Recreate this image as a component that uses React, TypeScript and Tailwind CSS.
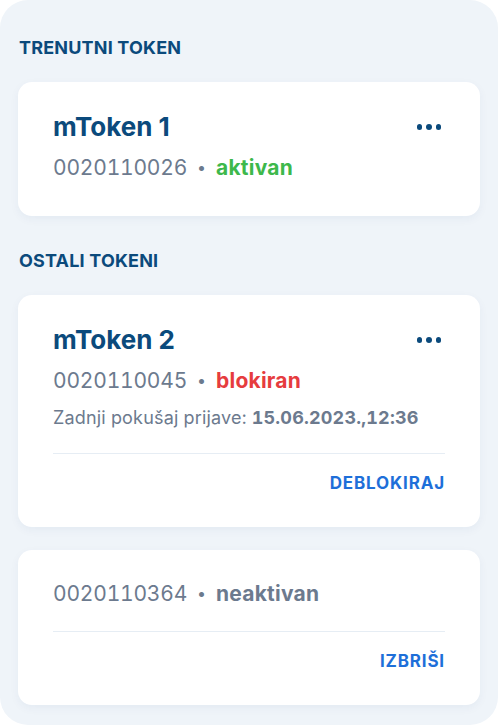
type Token = {
    name?: string;
    serial: string;
    status: "aktivan" | "blokiran" | "neaktivan";
    lastAttempt?: string;
    action?: string;
};

const STATUS_COLOR: Record<Token["status"], string> = {
    aktivan: "text-[#3db84b]",
    blokiran: "text-[#e63c3e]",
    neaktivan: "text-[#6c7a8e]",
};

function SectionTitle({ children }: { children: string }) {
    return (
        <h2 className="px-[1px] text-[18px] leading-[24px] font-bold tracking-[0.01em] text-[#0b4a7c]">
            {children}
        </h2>
    );
}

function Dots() {
    return (
        <button className="flex items-center gap-[4px] pt-[13px] pr-[4px]" aria-label="Više">
            <span className="w-[5.5px] h-[5.5px] rounded-full bg-[#0b4a7c]" />
            <span className="w-[5.5px] h-[5.5px] rounded-full bg-[#0b4a7c]" />
            <span className="w-[5.5px] h-[5.5px] rounded-full bg-[#0b4a7c]" />
        </button>
    );
}

function TokenCard({ token }: { token: Token }) {
    return (
        <div className="bg-white rounded-[14px] px-[35px] pt-[29px] pb-[34px] shadow-[0_3px_10px_rgba(20,60,110,0.05)]">
            {token.name && (
                <div className="flex items-start justify-between mb-[10px]">
                    <h3 className="text-[26px] leading-[32px] font-bold text-[#0b4a7c]">
                        {token.name}
                    </h3>
                    <Dots />
                </div>
            )}
            <p className="text-[21px] leading-[28px] text-[#6c7a8e] tabular-nums">
                <span className="tracking-[-0.01em]">{token.serial}</span>
                <span className="mx-[10px] text-[16px] align-[2px]">•</span>
                <span className={`font-bold tracking-[0.01em] ${STATUS_COLOR[token.status]}`}>{token.status}</span>
            </p>
            {token.lastAttempt && (
                <p className="mt-[11px] text-[18px] leading-[24px] tracking-[0.01em] text-[#6c7a8e] tabular-nums">
                    Zadnji pokušaj prijave: <span className="font-bold">{token.lastAttempt}</span>
                </p>
            )}
            {token.action && (
                <div className="mt-[23px] pt-[19px] border-t border-[#e6edf4] flex justify-end">
                    <button className="text-[17px] leading-[20px] font-bold tracking-[0.05em] text-[#1e6fd9]">
                        {token.action}
                    </button>
                </div>
            )}
        </div>
    );
}

export default function App() {
    return (
        <div className="w-[498px] bg-white" style={{ fontFamily: "Inter, 'Noto Sans', sans-serif" }}>
            <div className="rounded-[28px] bg-[#eff4f9] px-[18px] pt-[36px] pb-[20px]">
                <SectionTitle>TRENUTNI TOKEN</SectionTitle>
                <div className="mt-[22px]">
                    <TokenCard token={{ name: "mToken 1", serial: "0020110026", status: "aktivan" }} />
                </div>

                <div className="mt-[33px]">
                    <SectionTitle>OSTALI TOKENI</SectionTitle>
                </div>
                <div className="mt-[22px] flex flex-col gap-[23px]">
                    <TokenCard
                        token={{
                            name: "mToken 2",
                            serial: "0020110045",
                            status: "blokiran",
                            lastAttempt: "15.06.2023.,12:36",
                            action: "DEBLOKIRAJ",
                        }}
                    />
                    <TokenCard token={{ serial: "0020110364", status: "neaktivan", action: "IZBRIŠI" }} />
                </div>
            </div>
        </div>
    );
}
